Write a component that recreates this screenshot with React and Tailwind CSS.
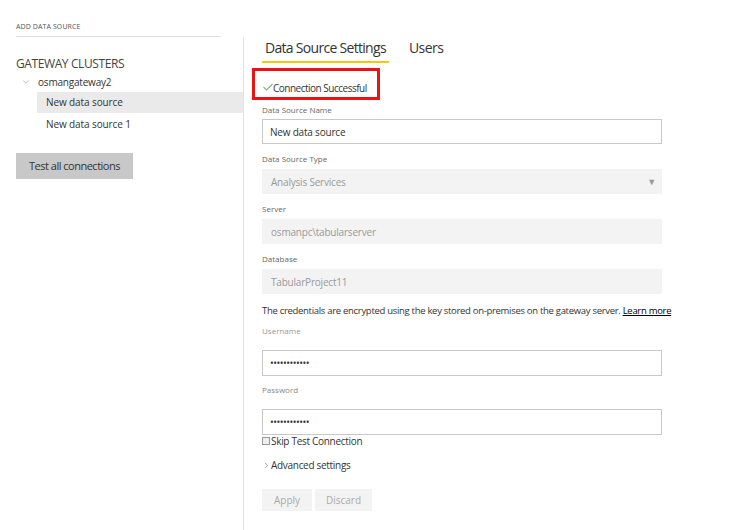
import { ChevronDown, ChevronRight } from 'lucide-react';

const Label = ({ children, className = '' }) => (
  <div className={`text-[8px] leading-[10px] text-[#666] ${className}`}>{children}</div>
);

const App = () => {
  return (
    <div className="w-[756px] h-[530px] bg-white flex font-['Open_Sans',sans-serif] text-[#333] overflow-hidden">
      {/* left nav */}
      <div className="w-[244px] shrink-0 flex flex-col">
        <div className="h-[37px] pl-4 pt-[22px]">
          <div className="w-[205px] h-[15px] border-b border-[#e0e0e0] text-[7px] leading-[10px] text-[#555] tracking-[0.1px]">
            ADD DATA SOURCE
          </div>
        </div>
        <div className="flex-1 border-r border-[#e3e3e3] pt-[20px]">
          <div className="pl-4 text-[12px] leading-[14px] text-[#444] tracking-[-0.4px]">GATEWAY CLUSTERS</div>
          <div className="pl-[21px] mt-[4px] h-[14px] flex items-center text-[10px] text-[#333]">
            <ChevronDown className="w-[10px] h-[10px] text-[#777]" strokeWidth={1.2} />
            <span className="ml-[7px] tracking-[-0.2px]">osmangateway2</span>
          </div>
          <div className="ml-[37px] mt-[3px] h-[21px] bg-[#eaeaea] flex items-center pl-[9px] text-[10px] text-[#333] tracking-[-0.1px]">
            New data source
          </div>
          <div className="ml-[37px] h-[22px] flex items-center pl-[9px] text-[10px] text-[#333] tracking-[-0.1px]">
            New data source 1
          </div>
          <div className="pl-4 mt-[17px]">
            <button className="w-[117px] h-[26px] bg-[#c8c8c8] text-[11px] text-[#333] tracking-[-0.5px]">
              Test all connections
            </button>
          </div>
        </div>
      </div>

      {/* right panel */}
      <div className="flex-1 pl-[18px] pt-[38px]">
        <div className="flex items-end gap-[20px] h-[25px]">
          <div className="h-[25px] px-[3px] border-b-2 border-[#f2c811] text-[14px] leading-[20px] text-[#333] tracking-[-0.7px]">
            Data Source Settings
          </div>
          <div className="h-[25px] text-[14px] leading-[20px] text-[#333] tracking-[-0.5px]">Users</div>
        </div>

        <div className="relative mt-[18px] h-[14px] flex items-center">
          <svg width="10" height="8" viewBox="0 0 10 8" className="ml-[1px] mb-[3px]">
            <polyline points="0.5,4 3.5,7 9.5,1" fill="none" stroke="#7fb77f" strokeWidth="1.1" />
          </svg>
          <span className="text-[10px] text-[#333] tracking-[-0.5px]">Connection Successful</span>
          <div className="absolute left-[-10px] top-[-13px] w-[128px] h-[32px] border-[3px] border-[#ee1111]" />
        </div>

        <Label className="mt-[10px]">Data Source Name</Label>
        <div className="mt-[4px] w-[400px] h-[25px] border border-[#c8c8c8] flex items-center pl-[7px] pt-[2px] text-[10px] text-[#333] tracking-[-0.2px]">
          New data source
        </div>

        <Label className="mt-[10px]">Data Source Type</Label>
        <div className="mt-[5px] w-[400px] h-[25px] bg-[#f3f3f3] flex items-center justify-between pl-[9px] pr-[6px] pt-[1px] text-[10px] text-[#999] tracking-[-0.2px]">
          <span>Analysis Services</span>
          <span className="text-[9px] text-[#999]">▼</span>
        </div>

        <Label className="mt-[10px]">Server</Label>
        <div className="mt-[5px] w-[400px] h-[25px] bg-[#f3f3f3] flex items-center pl-[9px] pt-[1px] text-[10px] text-[#999] tracking-[-0.2px]">
          osmanpc\tabularserver
        </div>

        <Label className="mt-[10px]">Database</Label>
        <div className="mt-[5px] w-[400px] h-[25px] bg-[#f3f3f3] flex items-center pl-[9px] pt-[1px] text-[10px] text-[#999] tracking-[-0.2px]">
          TabularProject11
        </div>

        <div className="mt-[11px] text-[9.5px] leading-[12px] text-[#333] whitespace-nowrap tracking-[-0.3px]">
          The credentials are encrypted using the key stored on-premises on the gateway server.{' '}
          <span className="underline text-black">Learn more</span>
        </div>

        <Label className="mt-[9px] text-[#999]">Username</Label>
        <div className="mt-[14px] w-[400px] h-[26px] border border-[#c8c8c8] flex items-center pl-[7px] text-[10px] text-[#333] tracking-[-0.5px]">
          ••••••••••••
        </div>

        <Label className="mt-[9px] text-[#888]">Password</Label>
        <div className="mt-[14px] w-[400px] h-[26px] border border-[#c8c8c8] flex items-center pl-[7px] text-[10px] text-[#333] tracking-[-0.5px]">
          ••••••••••••
        </div>

        <div className="flex items-center h-[12px] text-[10px] text-[#333] tracking-[-0.3px]">
          <span className="w-[8px] h-[8px] border border-[#999] bg-[#eee] mr-[1px]" />
          Skip Test Connection
        </div>

        <div className="mt-[12px] flex items-center h-[12px] text-[10px] text-[#333] tracking-[-0.3px]">
          <ChevronRight className="w-[9px] h-[9px] text-[#555]" strokeWidth={1.5} />
          Advanced settings
        </div>

        <div className="mt-[18px] flex gap-[3px]">
          <button className="w-[50px] h-[22px] bg-[#f3f3f3] text-[10px] text-[#aaa]">Apply</button>
          <button className="w-[57px] h-[22px] bg-[#f3f3f3] text-[10px] text-[#aaa]">Discard</button>
        </div>
      </div>
    </div>
  );
};

export default App;
